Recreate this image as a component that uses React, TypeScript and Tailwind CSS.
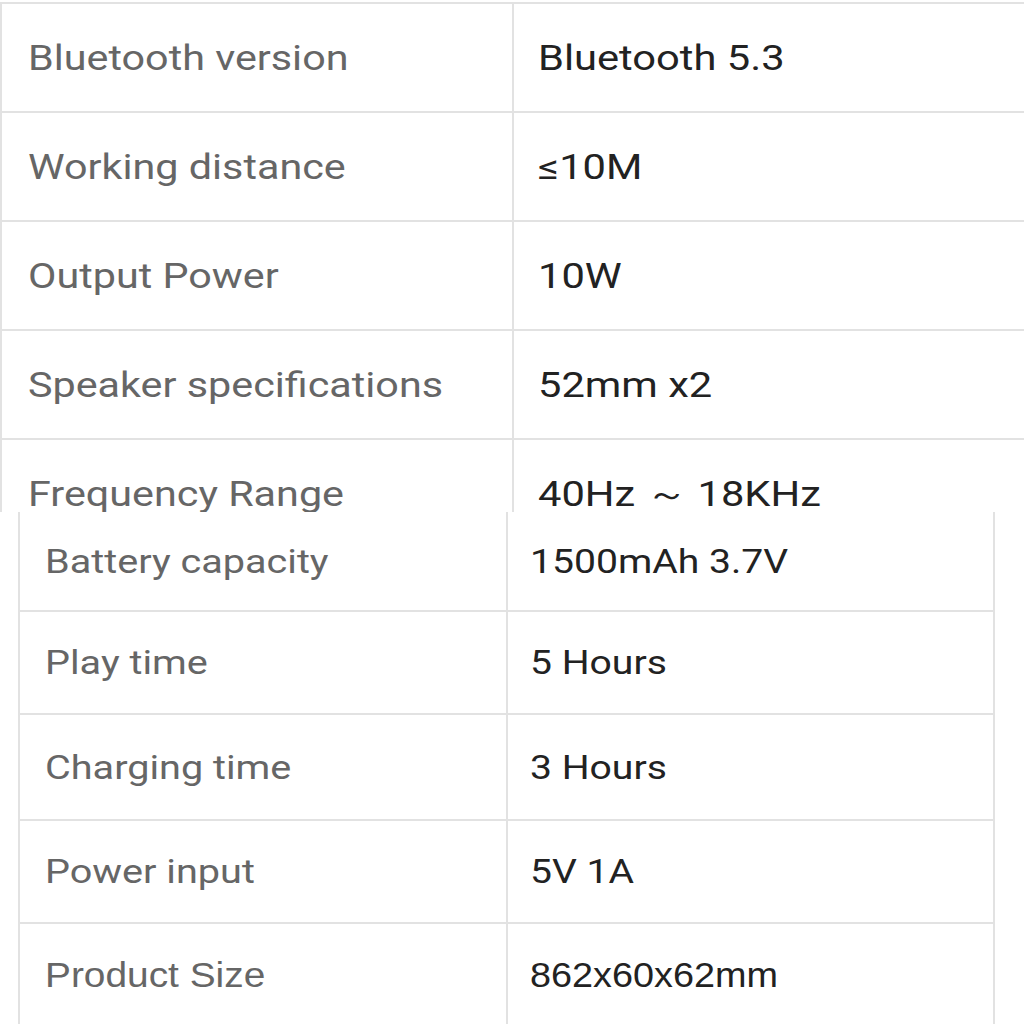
const top = [
  ['Bluetooth version', 'Bluetooth 5.3'],
  ['Working distance', '≤10M'],
  ['Output Power', '10W'],
  ['Speaker specifications', '52mm x2'],
  ['Frequency Range', '40Hz ～ 18KHz'],
];

const bottom = [
  ['Battery capacity', '1500mAh 3.7V', 'h-[100px]'],
  ['Play time', '5 Hours', 'h-[103px]'],
  ['Charging time', '3 Hours', 'h-[106px]'],
  ['Power input', '5V 1A', 'h-[103px]'],
];

export default function App() {
  return (
    <div className="w-[1024px] h-[1024px] overflow-hidden bg-white font-['Roboto','Liberation_Sans',sans-serif]">
      {/* upper screenshot, cut at the middle */}
      <div className="h-[512px] overflow-hidden pt-[2px]">
        <div className="border-t-[2px] border-l-[2px] border-[#e2e2e2]">
          {top.map(([k, v], i) => (
            <div key={k} className="flex h-[109px] border-b-[2px] border-[#e2e2e2]">
              <div className="w-[512px] shrink-0 border-r-[2px] border-[#e2e2e2] pl-[26px] flex items-center text-[35px] text-[#666]">
                <span className={`inline-block origin-left scale-x-[1.18] ${i === 4 ? 'pt-[4px]' : 'pt-[3px]'}`}>{k}</span>
              </div>
              <div className="flex-1 pl-[24px] flex items-center text-[35px] text-[#222]">
                <span className={`inline-block origin-left scale-x-[1.19] ${i === 4 ? 'pt-[4px]' : 'pt-[3px]'}`}>{v}</span>
              </div>
            </div>
          ))}
        </div>
      </div>

      {/* lower screenshot */}
      <div className="h-[512px] overflow-hidden pl-[18px] pr-[29px]">
        <div className="border-l-[2px] border-r-[2px] border-[#e2e2e2]">
          {bottom.map(([k, v, h]) => (
            <div key={k} className={`flex border-b-[2px] border-[#e2e2e2] ${h}`}>
              <div className="w-[488px] shrink-0 border-r-[2px] border-[#e2e2e2] pl-[25px] flex items-center text-[34px] text-[#666]">
                <span className="inline-block origin-left scale-x-[1.165]">{k}</span>
              </div>
              <div className="flex-1 pl-[22px] flex items-center text-[34px] text-[#222]">
                <span className="inline-block origin-left scale-x-[1.15]">{v}</span>
              </div>
            </div>
          ))}
          <div className="flex h-[110px] pb-[8px]">
            <div className="w-[488px] shrink-0 border-r-[2px] border-[#e2e2e2] pl-[25px] flex items-center">
              <span className="text-[35px] text-[#666] font-['Liberation_Sans',sans-serif] scale-x-[1.11] origin-left inline-block">
                Product Size
              </span>
            </div>
            <div className="flex-1 pl-[22px] flex items-center">
              <span className="text-[35px] text-[#222] font-['Liberation_Sans',sans-serif] scale-x-[1.08] origin-left inline-block">
                862x60x62mm
              </span>
            </div>
          </div>
        </div>
      </div>
    </div>
  );
}
